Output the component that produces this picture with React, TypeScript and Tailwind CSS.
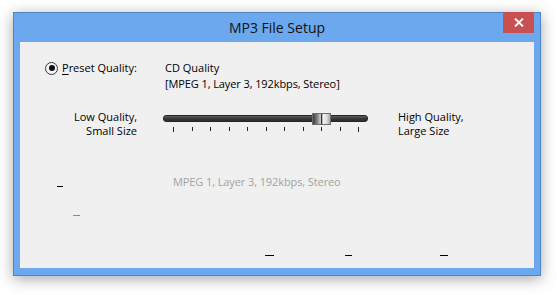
import React from "react";

export default function App() {
  const ticks = [0, 1, 2, 3, 4, 5, 6, 7, 8, 9, 10];
  return (
    <div className="w-[557px] h-[295px] bg-white pt-[12px] pl-[13px] font-['Open_Sans',sans-serif] text-black">
      <div className="w-[528px] h-[264px] border border-[#4d86c8] bg-[#6ba8ee] shadow-[0_3px_14px_rgba(0,0,0,0.35)] flex flex-col">
        <div className="relative h-[29px] flex items-center justify-center text-[14px] text-[#111]">
          <span>MP3 File Setup</span>
          <div className="absolute top-[-1px] right-[6px] w-[31px] h-[21px] bg-[#c75050] flex items-center justify-center">
            <svg width="10" height="9" viewBox="0 0 10 9">
              <path d="M1 0.5 L9 8.5 M9 0.5 L1 8.5" stroke="white" strokeWidth="1.8" fill="none" />
            </svg>
          </div>
        </div>
        <div className="mx-[6px] h-[226px] bg-[#f0f0f0] text-[11px] flex flex-col">
          {/* Row 1 */}
          <div className="flex pt-[18px]">
            <div className="w-[145px] pl-[25px] flex items-center h-[16px]">
              <div className="w-[13px] h-[13px] rounded-full border border-[#3a3a3a] bg-[#f4f4f4] flex items-center justify-center">
                <div className="w-[6px] h-[6px] rounded-full bg-[#111]" />
              </div>
              <span className="ml-[4px] leading-[16px]">
                <span className="underline underline-offset-2">P</span>reset Quality:
              </span>
            </div>
            <div className="flex flex-col leading-[16px]">
              <span>CD Quality</span>
              <span className="tracking-[-0.1px]">[MPEG 1, Layer 3, 192kbps, Stereo]</span>
            </div>
          </div>
          {/* Slider row */}
          <div className="flex items-start mt-[17px]">
            <div className="w-[117px] text-right leading-[14px] mt-[1px] flex flex-col">
              <span>Low Quality,</span>
              <span>Small Size</span>
            </div>
            <div className="relative ml-[26px] w-[205px] h-[24px]">
              <div className="mt-[6px] h-[7px] rounded-[3px] border border-[#262626] bg-[linear-gradient(to_bottom,#5e5e5e,#3a3a3a_50%,#2c2c2c)]" />
              <div className="mt-[5px] flex justify-between pl-[10px] pr-[9px] items-start">
                {ticks.map((t) => (
                  <div
                    key={t}
                    className={
                      t === 0 || t === 10
                        ? "w-px h-[5px] bg-[#222]"
                        : "w-px h-[4px] bg-[#222]"
                    }
                  />
                ))}
              </div>
              <div className="absolute left-[149px] top-[4px] w-[19px] h-[12px] border border-[#6e6e6e] bg-[linear-gradient(to_right,#3c3c3c_0%,#8a8a8a_28%,#cfcfcf_44%,#2e2e2e_47%,#2e2e2e_53%,#f3f3f3_57%,#e2e2e2_78%,#a8a8a8_100%)]" />
            </div>
            <div className="ml-[30px] leading-[14px] mt-[1px] flex flex-col">
              <span>High Quality,</span>
              <span>Large Size</span>
            </div>
          </div>
          {/* Gray text row */}
          <div className="flex items-start h-[15px] mt-[36px]">
            <div className="ml-[37px] mt-[12px] w-[6px] h-px bg-black" />
            <span className="ml-[110px] leading-[15px] text-[#a3a3a3] tracking-[-0.1px]">MPEG 1, Layer 3, 192kbps, Stereo</span>
          </div>
          <div className="ml-[53px] mt-[26px] w-[7px] h-px bg-[#8a8a8a]" />
          <div className="flex mt-[39px]">
            <div className="ml-[245px] w-[9px] h-px bg-black" />
            <div className="ml-[71px] w-[7px] h-px bg-black" />
            <div className="ml-[88px] w-[8px] h-px bg-black" />
          </div>
        </div>
      </div>
    </div>
  );
}
